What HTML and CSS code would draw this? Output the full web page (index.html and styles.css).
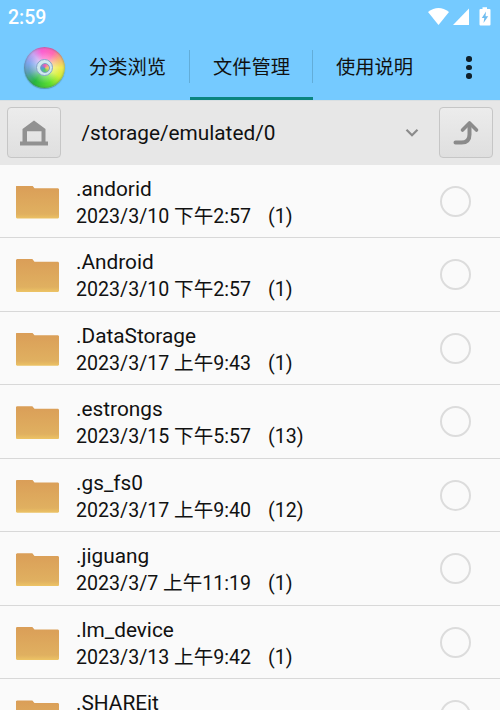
FILE: index.html
```html
<!DOCTYPE html>
<html lang="zh-CN">
<head>
    <meta charset="UTF-8">
    <meta name="viewport" content="width=device-width, initial-scale=1.0">
    <title>文件管理</title>
    <link rel="stylesheet" href="styles.css">
</head>
<body>

    <header class="header">
        <!-- Status bar -->
        <div class="status">
            <span class="time">2:59</span>
            <svg class="status-icons" viewBox="0 0 64 20" width="64" height="20">
                <path fill="#fff" d="M0 4Q10.500 -4 21 4L10.500 17Z"/>
                <path fill="#fff" d="M41 .5V17H25Z"/>
                <path fill="#fff" d="M54.500 1V-.8h4.500V1h2.500a1 1 0 0 1 1 1V16.500a1 1 0 0 1-1 1h-9a1 1 0 0 1-1-1V2a1 1 0 0 1 1-1z"/>
                <path fill="#6fbdf0" d="M58 3.500l-4.200 6.500h2.500l-.8 5 4.700-6.700H57.500z"/>
            </svg>
        </div>

        <!-- Tabs -->
        <nav class="nav">
            <div class="logo"><div class="logo-ring"><div class="logo-core"></div></div></div>
            <div class="tabs">
                <div class="tab">分类浏览</div>
                <div class="tab active">文件管理</div>
                <div class="tab">使用说明</div>
            </div>
            <div class="menu"><i></i><i></i><i></i></div>
        </nav>
    </header>

    <!-- Path bar -->
    <div class="toolbar">
        <button class="btn">
            <svg viewBox="0 0 52 49" width="52" height="49">
                <path fill="#919191" fill-rule="evenodd" d="M26 12.500L37.500 21V33.500H40V37.500H12V33.500H14.500V21ZM19 23.200V33.500H33.500V23.200Z"/>
            </svg>
        </button>
        <span class="path">/storage/emulated/0</span>
        <svg class="arrow" viewBox="0 0 14 10" width="14" height="10">
            <path fill="none" stroke="#8b8b8b" stroke-width="2.200" d="M1.500 1.800L7 7.300L12.500 1.800"/>
        </svg>
        <button class="btn">
            <svg viewBox="0 0 52 49" width="52" height="49">
                <path fill="none" stroke="#8b8b8b" stroke-width="4" stroke-linecap="round" d="M15.500 34.500H21.500Q29.500 34.500 29.500 26.500V17"/>
                <path fill="none" stroke="#8b8b8b" stroke-width="3.600" stroke-linecap="round" stroke-linejoin="round" d="M22.500 22L29.500 15L36.500 22"/>
            </svg>
        </button>
    </div>

    <!-- File list -->
    <ul class="list">
        <li class="row">
            <div class="folder"></div>
            <div class="info"><p>.andorid</p><p class="date">2023/3/10 下午2:57<span>(1)</span></p></div>
            <div class="check"></div>
        </li>
        <li class="row">
            <div class="folder"></div>
            <div class="info"><p>.Android</p><p class="date">2023/3/10 下午2:57<span>(1)</span></p></div>
            <div class="check"></div>
        </li>
        <li class="row">
            <div class="folder"></div>
            <div class="info"><p>.DataStorage</p><p class="date">2023/3/17 上午9:43<span>(1)</span></p></div>
            <div class="check"></div>
        </li>
        <li class="row">
            <div class="folder"></div>
            <div class="info"><p>.estrongs</p><p class="date">2023/3/15 下午5:57<span>(13)</span></p></div>
            <div class="check"></div>
        </li>
        <li class="row">
            <div class="folder"></div>
            <div class="info"><p>.gs_fs0</p><p class="date">2023/3/17 上午9:40<span>(12)</span></p></div>
            <div class="check"></div>
        </li>
        <li class="row">
            <div class="folder"></div>
            <div class="info"><p>.jiguang</p><p class="date">2023/3/7 上午11:19<span>(1)</span></p></div>
            <div class="check"></div>
        </li>
        <li class="row">
            <div class="folder"></div>
            <div class="info"><p>.lm_device</p><p class="date">2023/3/13 上午9:42<span>(1)</span></p></div>
            <div class="check"></div>
        </li>
        <li class="row">
            <div class="folder"></div>
            <div class="info"><p>.SHAREit</p></div>
            <div class="check"></div>
        </li>
    </ul>

</body>
</html>
```

FILE: styles.css
```css
* {
    box-sizing: border-box;
}
body {
    margin: 0;
    height: 710px;
    overflow: hidden;
    display: flex;
    flex-direction: column;
    background-color: #fafafa;
    color: #111;
    font-family: Roboto, "Noto Sans CJK SC", sans-serif;
    font-size: 20px;
}
.header {
    flex: none;
    height: 100px;
    background-color: #75caff;
}
.status {
    display: flex;
    justify-content: space-between;
    height: 34px;
    padding: 7px 8px 0 8px;
}
.time {
    color: #fff;
    font-size: 19.5px;
    font-weight: 500;
    line-height: 22px;
}
.status-icons {
    overflow: visible;
    margin-top: 1px;
    margin-right: 0;
}
.nav {
    display: flex;
    height: 66px;
}
.logo {
    display: flex;
    align-items: center;
    justify-content: center;
    width: 41px;
    height: 41px;
    margin: 13px 2px 0 24px;
    border-radius: 50%;
    background: radial-gradient(circle, rgba(255,255,255,0.45) 20%, transparent 55%), conic-gradient(from -10deg, #fb5fd0, #ff68b4 40deg, #f7b478 70deg, #f2ea55 100deg, #d6f03a 130deg, #5fe030 170deg, #28b840 225deg, #5aa0b4 262deg, #7fa6ee 295deg, #c9a5f2 330deg, #fb5fd0);
    box-shadow: inset 0 0 3px rgba(60,90,80,0.7), 0 1px 1px rgba(50,100,80,0.5);
}
.logo-ring {
    display: flex;
    align-items: center;
    justify-content: center;
    width: 17px;
    height: 17px;
    border: 1.5px solid #86a2c8;
    border-radius: 50%;
    background-color: #cfe8ee;
}
.logo-core {
    width: 10px;
    height: 10px;
    border: 1px solid #7aa0c0;
    border-radius: 50%;
    background: conic-gradient(#f557ba, #efd264, #55c764, #4c9fd5, #f557ba);
}
.tabs {
    display: flex;
}
.tab {
    position: relative;
    width: 123px;
    height: 66px;
    text-align: center;
    font-size: 19.3px;
    line-height: 67px;
}
.tab:first-child {
    padding-right: 2px;
}
/* thin line between tabs */
.tab + .tab::before {
    content: "";
    position: absolute;
    left: -1px;
    top: 16px;
    width: 1px;
    height: 33px;
    background-color: #62add9;
}
.active {
    border-bottom: 3px solid #0b8580;
}
.menu {
    display: flex;
    flex-direction: column;
    gap: 3px;
    margin: 22px 0 0 30px;
}
.menu i {
    width: 5.5px;
    height: 5.5px;
    border-radius: 50%;
    background-color: #10202b;
}
.toolbar {
    flex: none;
    display: flex;
    align-items: center;
    height: 64.5px;
    padding: 0 7px;
    background-color: #e7e7e7;
    border-top: 1px solid #d9dfe2;
}
.btn {
    width: 54px;
    height: 51px;
    padding: 0;
    border: 1px solid #c6c6c6;
    border-radius: 4px;
    background: linear-gradient(#ececec, #dfdfdf);
}
.btn svg {
    display: block;
}
.path {
    flex: 1;
    padding-left: 20.5px;
    font-size: 20.8px;
}
.arrow {
    margin-right: 20px;
}
.list {
    margin: 0;
    padding: 0;
    list-style: none;
}
.row {
    display: flex;
    height: 73.57px;
    padding: 0 29px 0 16px;
    border-bottom: 1.5px solid #d8d8d8;
}
.folder {
    width: 43px;
    height: 33px;
    margin-top: 21px;
    background: linear-gradient(#da9e58, #e0b060 85%, #edc465);
    clip-path: polygon(0 2%, 3% 0, 38% 0, 43% 8%, 98% 8%, 100% 11%, 100% 97%, 98% 100%, 2% 100%, 0 97%);
}
.info {
    flex: 1;
    padding: 11px 0 0 17px;
}
.info p {
    margin: 0;
    height: 27px;
    font-size: 20.8px;
    line-height: 27px;
    white-space: nowrap;
}
.info .date {
    font-size: 19.6px;
    line-height: 28px;
}
.date span {
    margin-left: 17px;
}
.check {
    width: 31px;
    height: 31px;
    margin-top: 21px;
    border: 2px solid #dcdcdc;
    border-radius: 50%;
}
```
